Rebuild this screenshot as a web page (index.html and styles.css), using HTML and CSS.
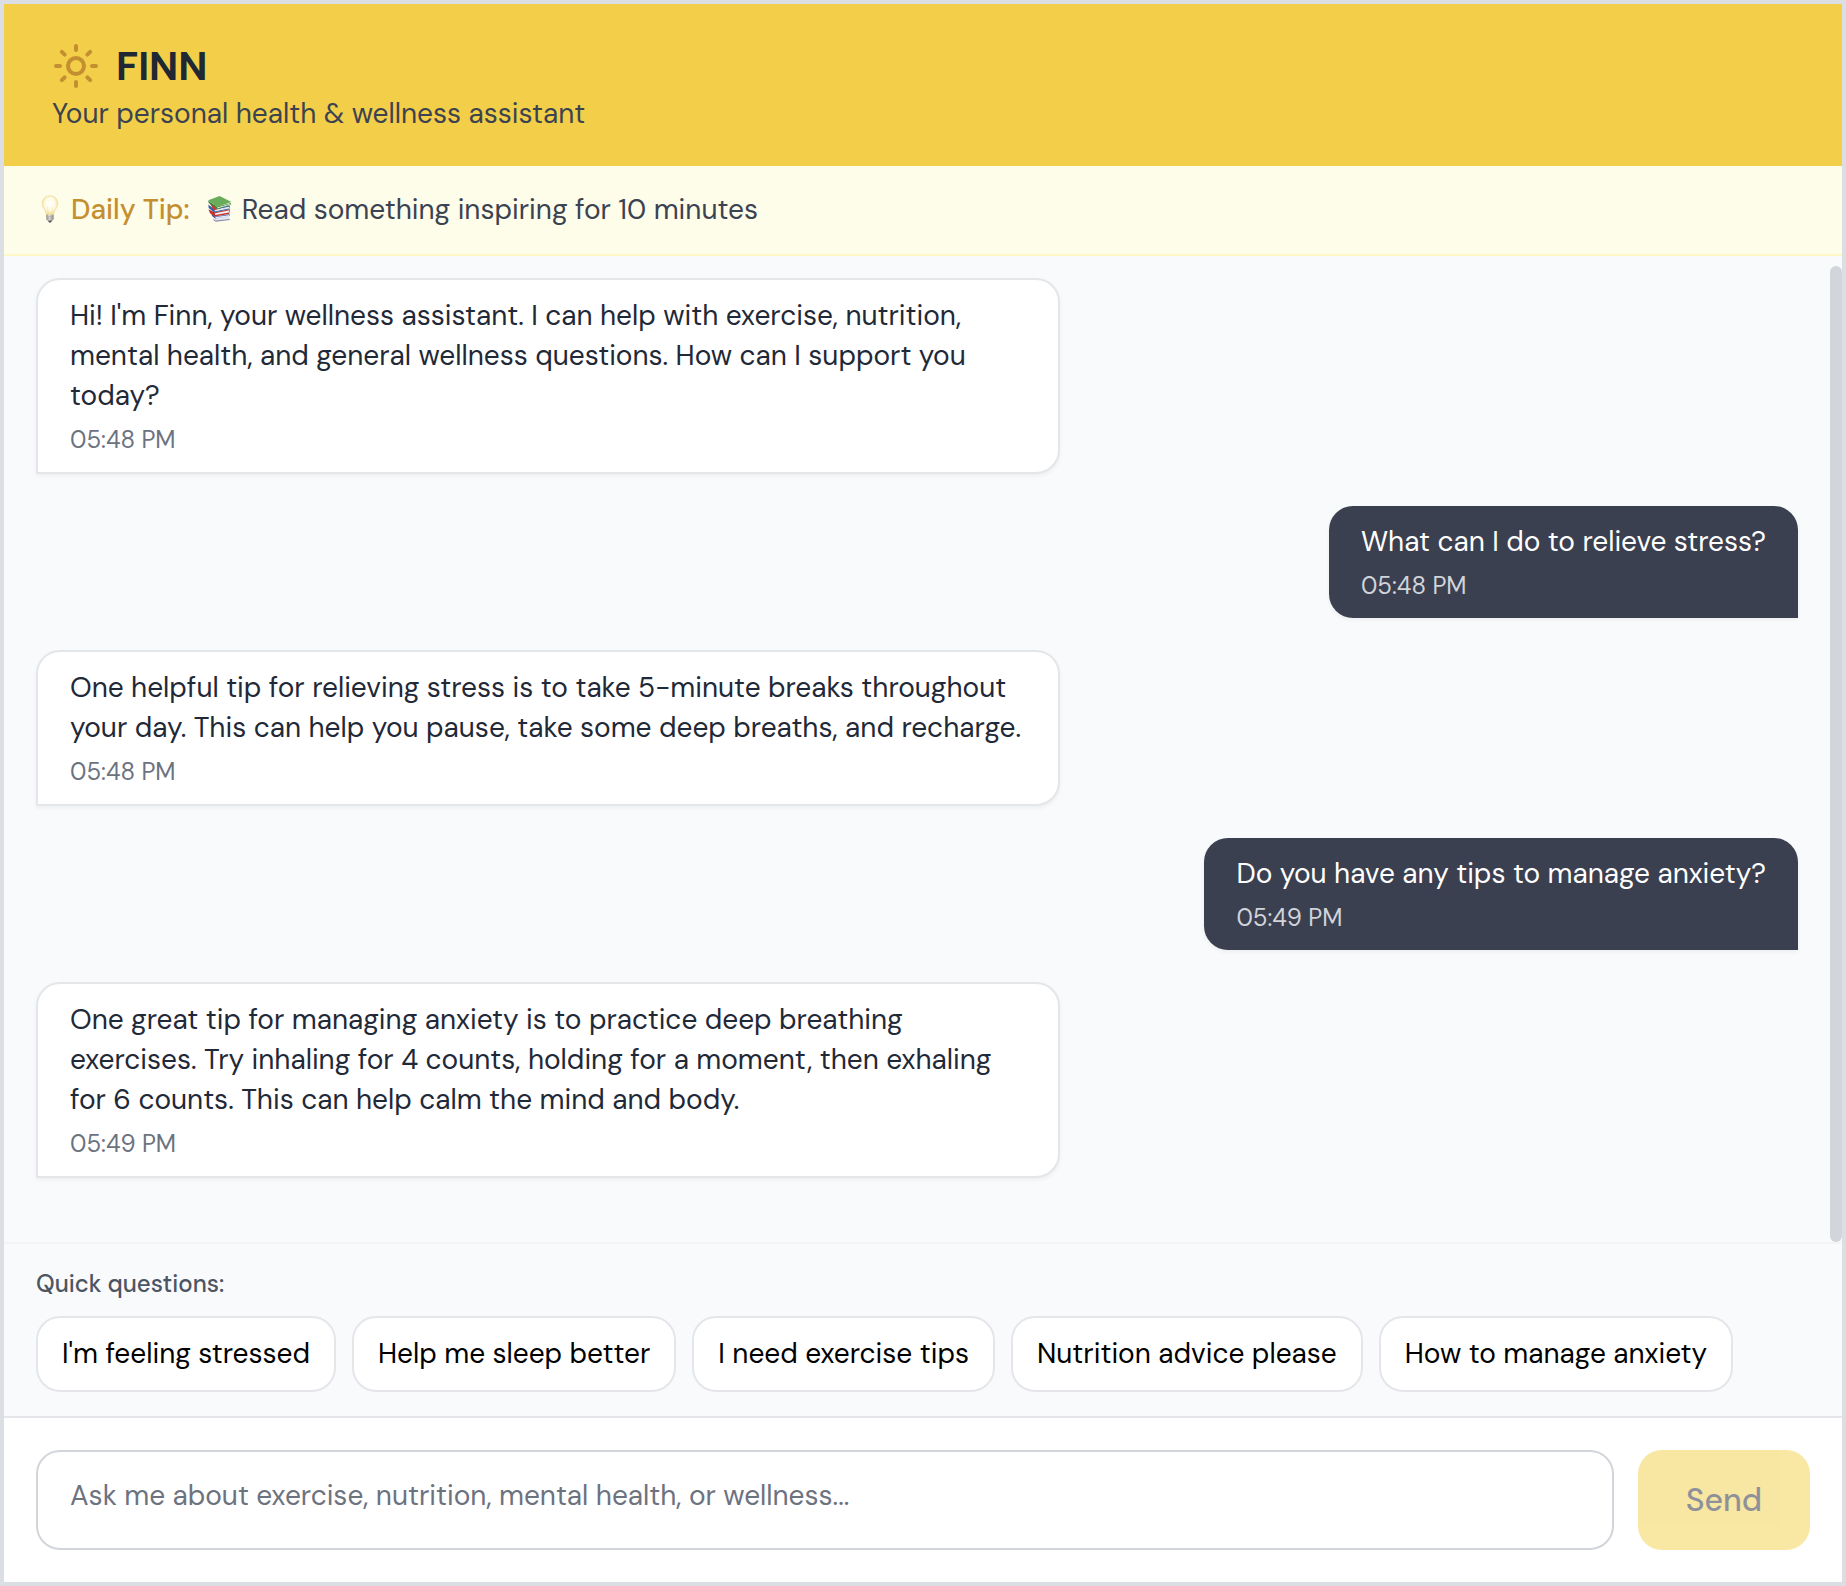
FILE: index.html
```html
<!DOCTYPE html>
<html lang="en">
<head>
<meta charset="utf-8">
<title>FINN</title>
<link rel="stylesheet" href="styles.css">
</head>
<body>
<div class="app">
  <header class="header">
    <div class="brand">
      <svg class="sun" viewBox="0 0 24 24" fill="none" stroke="currentColor" stroke-width="2" stroke-linecap="round" stroke-linejoin="round" aria-hidden="true">
        <circle cx="12" cy="12" r="4"/>
        <path d="M12 2v2M12 20v2M4.93 4.93l1.41 1.41M17.66 17.66l1.41 1.41M2 12h2M20 12h2M6.34 17.66l-1.41 1.41M19.07 4.93l-1.41 1.41"/>
      </svg>
      <h1 class="title">FINN</h1>
    </div>
    <p class="subtitle">Your personal health &amp; wellness assistant</p>
  </header>

  <div class="tip">
    <svg class="emoji" viewBox="0 0 28 28" aria-hidden="true">
      <defs>
        <radialGradient id="glass" cx="50%" cy="42%" r="58%">
          <stop offset="0" stop-color="#ffffff"/>
          <stop offset=".55" stop-color="#fffbe6"/>
          <stop offset="1" stop-color="#efd883"/>
        </radialGradient>
        <linearGradient id="metal">
          <stop offset="0" stop-color="#85837f"/>
          <stop offset=".4" stop-color="#e6e5e2"/>
          <stop offset="1" stop-color="#8b8985"/>
        </linearGradient>
      </defs>
      <path d="M14 .8c-4.600 0-7.800 3.300-7.800 7.500 0 3 1.400 4.700 2.600 6.700.9 1.500 1.300 3.300 1.700 5.200h7c.4-1.900.8-3.700 1.700-5.200 1.200-2 2.600-3.700 2.600-6.700C21.800 4.100 18.600.8 14 .8z" fill="url(#glass)" stroke="#ecd894" stroke-width=".6"/>
      <path d="M12.300 19.500 11.500 12M15.700 19.500l.8-7.500" stroke="#f0dfa6" stroke-width=".6" fill="none"/>
      <path d="M10.400 19.800h7.200v4.200c0 1.200-1.200 1.800-1.800 2h-3.600c-.6-.2-1.800-.8-1.800-2z" fill="url(#metal)"/>
      <path d="M10.500 21.600h7M10.600 23.400h6.800" stroke="#9c9a96" stroke-width=".5"/>
      <path d="M12 25.600h4l-1 1.900h-2z" fill="#55524f"/>
    </svg>
    <span class="tip-label">Daily Tip:</span>
    <svg class="emoji books" viewBox="0 0 28 28" aria-hidden="true">
      <path d="M9 21.500l2 1.800 13.500-1.800-.3 3.300L11 26.300 8.200 24z" fill="#e4e5ec"/>
      <path d="M8.200 24l2.700 1.500 13.800-1.600.2 1L11 26.800 8.400 25.200z" fill="#8b8fae"/>
      <path d="M6.500 18.500l3.800 3 14.400-2.200.2 1.400L10.400 23.600 7 21z" fill="#3b57ab"/>
      <path d="M10.400 22l14-1.900.2 1.500-13.900 2z" fill="#dfe3ee"/>
      <path d="M3.400 14.300l5.800 3 15.600-3 .3 1.200-1 3.400L9.600 21.600 5 18.300z" fill="#c5322b"/>
      <path d="M10 18.200l14.600-2.900-.6 2.300-13.900 2.500z" fill="#efeff2"/>
      <path d="M3.300 9.500l5.500 4.600 15.800-3.600.4 1.200-.8 2.600-15.100 3.200L3.700 13z" fill="#2f5fa8"/>
      <path d="M9.600 14.800l15-3.300-.6 2-14.300 3z" fill="#e4e9f2"/>
      <path d="M5 8.500l3.500 6.700 3.500-.6-2-4.500z" fill="#cf3a30"/>
      <path d="M3.200 5.400l8.200 6.300L26 7.900l.1 1.900-13.800 4.500L3.700 8z" fill="#42813b"/>
      <path d="M12 12.500l13.800-4.100-.2 1.200-13.300 4z" fill="#dcebd5"/>
      <path d="M3.200 5.200 14.600 1.100 26.500 7 11.600 11.900z" fill="#69ac5a"/>
    </svg>
    <span class="tip-text">Read something inspiring for 10 minutes</span>
  </div>

  <main class="chat">
    <div class="message bot">
      <p class="text">Hi! I'm Finn, your wellness assistant. I can help with exercise, nutrition, mental health, and general wellness questions. How can I support you today?</p>
      <time class="time">05:48 PM</time>
    </div>
    <div class="message user">
      <p class="text">What can I do to relieve stress?</p>
      <time class="time">05:48 PM</time>
    </div>
    <div class="message bot">
      <p class="text">One helpful tip for relieving stress is to take 5-minute breaks throughout your day. This can help you pause, take some deep breaths, and recharge.</p>
      <time class="time">05:48 PM</time>
    </div>
    <div class="message user">
      <p class="text">Do you have any tips to manage anxiety?</p>
      <time class="time">05:49 PM</time>
    </div>
    <div class="message bot">
      <p class="text">One great tip for managing anxiety is to practice deep breathing exercises. Try inhaling for 4 counts, holding for a moment, then exhaling for 6 counts. This can help calm the mind and body.</p>
      <time class="time">05:49 PM</time>
    </div>
    <div class="scroll-thumb"></div>
  </main>

  <section class="quick">
    <p class="quick-label">Quick questions:</p>
    <div class="chips">
      <button class="chip">I'm feeling stressed</button>
      <button class="chip">Help me sleep better</button>
      <button class="chip">I need exercise tips</button>
      <button class="chip">Nutrition advice please</button>
      <button class="chip">How to manage anxiety</button>
    </div>
  </section>

  <form class="composer">
    <textarea class="input" placeholder="Ask me about exercise, nutrition, mental health, or wellness..."></textarea>
    <button class="send" disabled>Send</button>
  </form>
</div>
</body>
</html>
```
FILE: styles.css
```css
* {
  box-sizing: border-box;
  margin: 0;
}

body {
  font-family: "DM Sans", Lato, "Liberation Sans", sans-serif;
  font-size: 28px;
  line-height: 40px;
  color: #1f2937;
}

.app {
  display: flex;
  flex-direction: column;
  height: 1586px;
  border: 4px solid #dbdee3;
  background: #f9fafc;
}

.header {
  height: 162px;
  padding: 38px 48px 32px;
  background: #f3cf49;
}

.brand {
  display: flex;
  align-items: center;
  gap: 16px;
  height: 48px;
  margin-bottom: 4px;
}

.sun {
  width: 48px;
  height: 48px;
  color: #c48f30;
}

.title {
  font-size: 40px;
  line-height: 48px;
  font-weight: 700;
  color: #202833;
}

.subtitle {
  color: #3c4350;
}

.tip {
  display: flex;
  align-items: center;
  height: 90px;
  padding: 24px 32px;
  background: #fefdea;
  border-bottom: 2px solid #fdf8c6;
  color: #3b4251;
}

.emoji {
  width: 28px;
  height: 28px;
  margin: 0 7px 3px 0;
}

.books {
  margin-left: 15px;
  margin-right: 9px;
}

.tip-label {
  font-weight: 500;
  color: #c48f30;
}

.chat {
  position: relative;
  display: flex;
  flex-direction: column;
  align-items: flex-start;
  gap: 32px;
  flex: 1;
  padding: 22px 44px 0 32px;
}

.message {
  max-width: 1024px;
  padding: 16px 32px;
  border-radius: 24px;
  box-shadow: 0 2px 4px rgba(0, 0, 0, 0.05);
}

.bot {
  width: 1024px;
  background: #fff;
  border: 2px solid #e4e6ea;
  border-bottom-left-radius: 0;
}

.user {
  align-self: flex-end;
  background: #3b4050;
  color: #fff;
  border-bottom-right-radius: 0;
}

.time {
  display: block;
  margin-top: 8px;
  font-size: 24px;
  line-height: 32px;
  color: #6d727f;
}

.user .time {
  color: #d1d4da;
}

.scroll-thumb {
  position: absolute;
  top: 10px;
  right: 0;
  bottom: 0;
  width: 12px;
  border-radius: 6px;
  background: #d2d5da;
}

.quick {
  padding: 24px 32px;
  border-top: 2px solid #f3f4f6;
}

.quick-label {
  margin-bottom: 16px;
  font-size: 24px;
  line-height: 32px;
  font-weight: 500;
  color: #4d5562;
}

.chips {
  display: flex;
  gap: 16px;
}

.chip {
  padding: 16px 24px;
  border: 2px solid #e4e6ea;
  border-radius: 24px;
  background: #fff;
  font: inherit;
  color: #000;
}

.composer {
  display: flex;
  gap: 24px;
  padding: 32px;
  border-top: 2px solid #e4e6ea;
  background: #fff;
}

.input {
  flex: 1;
  height: 100px;
  padding: 24px 32px;
  border: 2px solid #d2d5da;
  border-radius: 24px;
  background: #fff;
  font: inherit;
  resize: none;
  overflow: hidden;
}

.input::placeholder {
  color: #6d727f;
  opacity: 1;
}

.send {
  width: 172px;
  border: 0;
  border-radius: 24px;
  background: #f3cf49;
  font: inherit;
  font-size: 32px;
  font-weight: 500;
  color: #202833;
  opacity: 0.5;
}
```
